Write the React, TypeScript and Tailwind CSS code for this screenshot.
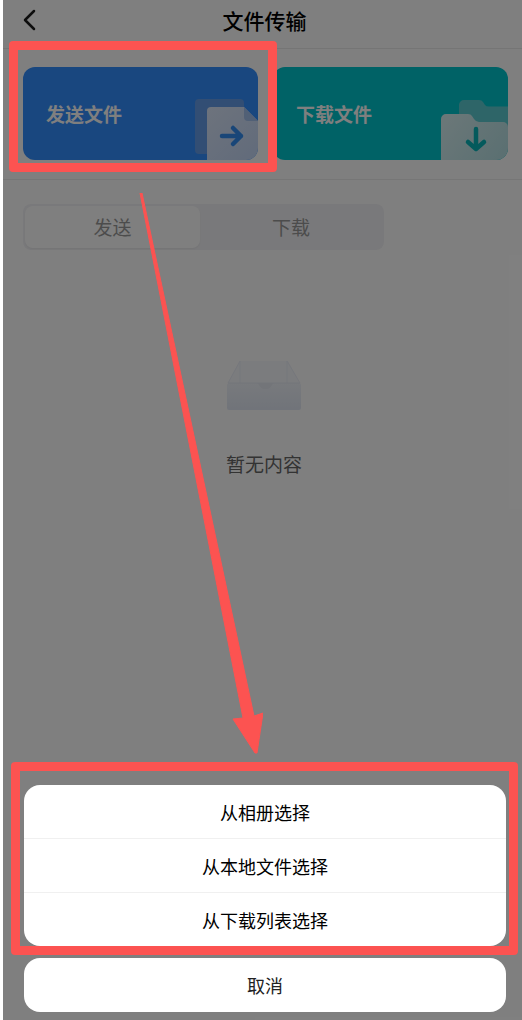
import clsx from "clsx";

const sources = ["从相册选择", "从本地文件选择", "从下载列表选择"];

const tabs = [
  { label: "发送", active: true },
  { label: "下载", active: false },
];

function SendArt() {
  return (
    <svg width="63" height="61" viewBox="0 0 63 61" fill="none" aria-hidden="true">
      <rect y="0" width="49" height="55" rx="4" fill="#649de8" />
      <path d="M12 61V12a4 4 0 0 1 4-4h33l14 14v39z" fill="url(#sheet)" />
      <path d="M49 8v10a4 4 0 0 0 4 4h10z" fill="#a3c0ec" />
      <path
        d="M27 37h19M38 29l8 8-8 8"
        stroke="#328cf0"
        strokeWidth="4.5"
        strokeLinecap="round"
        strokeLinejoin="round"
      />
      <defs>
        <linearGradient id="sheet" x1="12" y1="8" x2="63" y2="61" gradientUnits="userSpaceOnUse">
          <stop stopColor="#dbe7fa" />
          <stop offset="1" stopColor="#c3d6f6" />
        </linearGradient>
      </defs>
    </svg>
  );
}

function DownloadArt() {
  return (
    <svg width="67" height="60" viewBox="0 0 67 60" fill="none" aria-hidden="true">
      <path d="M18 60V5a5 5 0 0 1 5-5h15q3 0 4 2l2 3q1 1.500 4 1.500h19V60z" fill="#5ccbd0" />
      <path
        d="M0 60V19a5 5 0 0 1 5-5h22q3 0 4 2l2 3q2 3 5 3h24a5 5 0 0 1 5 5v33z"
        fill="url(#folder)"
      />
      <path
        d="M35 29v20M27 42l8 7 8-7"
        stroke="#08b5b9"
        strokeWidth="4.500"
        strokeLinecap="round"
        strokeLinejoin="round"
      />
      <defs>
        <linearGradient id="folder" x1="0" y1="14" x2="67" y2="60" gradientUnits="userSpaceOnUse">
          <stop stopColor="#d8f0f2" />
          <stop offset="1" stopColor="#b4dfe3" />
        </linearGradient>
      </defs>
    </svg>
  );
}

function EmptyTray() {
  return (
    <svg width="74" height="50" viewBox="0 0 74 50" fill="none" aria-hidden="true">
      <path d="M13 1h48l12 22H1z" fill="#f6f9fd" />
      <path d="M13 1v22M60 1v22M13 1L1 23M60 1l13 22" stroke="#eceff8" />
      <path d="M28 23h20v8H28z" fill="#e6eaf3" />
      <path
        d="M3 23h27q1 0 2 2 2 4 5 4h3q3 0 5-4 1-2 2-2h25q2 0 2 2v23q0 2-2 2H2q-2 0-2-2V25q0-2 3-2z"
        fill="url(#tray)"
      />
      <path d="M1 23h72" stroke="#e6eaf3" />
      <defs>
        <linearGradient id="tray" x1="37" y1="23" x2="37" y2="50" gradientUnits="userSpaceOnUse">
          <stop stopColor="#f0f4fa" />
          <stop offset="1" stopColor="#e2e8f4" />
        </linearGradient>
      </defs>
    </svg>
  );
}

function Highlight({ className }: { className: string }) {
  return (
    <div
      aria-hidden="true"
      className={clsx(
        "pointer-events-none absolute z-20 rounded-sm border-9 border-[#fc5351]",
        className,
      )}
    />
  );
}

export default function App() {
  return (
    <main className="relative min-h-screen overflow-hidden bg-white pl-[3px] font-['Noto_Sans_CJK_SC',sans-serif]">
      <header className="grid h-[49px] grid-cols-[52px_1fr_48px] items-center border-b border-[#ebebeb] pb-2">
        <button type="button" aria-label="返回" className="flex h-10 items-center pl-5">
          <svg width="13" height="22" viewBox="0 0 13 22" fill="none" aria-hidden="true">
            <path
              d="M11 2L2 11l9 9"
              stroke="#1a1a1a"
              strokeWidth="2.500"
              strokeLinecap="round"
              strokeLinejoin="round"
            />
          </svg>
        </button>
        <h1 className="text-center text-[21px] leading-8 font-medium text-black">文件传输</h1>
      </header>

      <section className="grid grid-cols-2 gap-[15px] border-b border-[#ededed] pt-[18px] pr-[14px] pb-[19px] pl-5">
        <div className="relative">
          <button
            type="button"
            className="flex h-[93px] w-full items-end justify-between overflow-hidden rounded-xl bg-[#328eff] pl-[23px]"
          >
            <span className="self-center text-[19px] leading-7 font-bold text-white">发送文件</span>
            <SendArt />
          </button>
          <Highlight className="-top-[26px] -right-[19px] -bottom-3 -left-[14px]" />
        </div>
        <button
          type="button"
          className="flex h-[93px] w-full items-end justify-between overflow-hidden rounded-xl bg-[#00c4cc] pl-[23px]"
        >
          <span className="self-center text-[19px] leading-7 font-bold text-white">下载文件</span>
          <DownloadArt />
        </button>
      </section>

      <section className="px-5 pt-6">
        <div
          role="tablist"
          className="grid h-[46px] w-[361px] max-w-full grid-cols-[175fr_182fr] rounded-lg bg-[#f3f3f6] p-[2px]"
        >
          {tabs.map((tab) => (
            <button
              key={tab.label}
              type="button"
              role="tab"
              aria-selected={tab.active}
              className={clsx(
                "rounded-lg text-[19px] leading-7 text-[#999]",
                tab.active && "bg-white shadow-xs",
              )}
            >
              {tab.label}
            </button>
          ))}
        </div>
      </section>

      <section className="flex flex-col items-center gap-10 pt-[110px] pl-[3px]">
        <EmptyTray />
        <p className="text-[19px] leading-7 text-[#666]">暂无内容</p>
      </section>

      <div className="absolute inset-y-0 right-0 left-[3px] z-10 flex flex-col justify-end gap-3 bg-black/50 pr-4 pb-2 pl-[21px]">
        <div className="relative">
          <ul className="divide-y divide-[#f0f0f0] overflow-hidden rounded-2xl bg-white">
            {sources.map((source) => (
              <li key={source}>
                <button type="button" className="h-[53px] w-full text-lg text-black">
                  {source}
                </button>
              </li>
            ))}
          </ul>
          <Highlight className="-top-[23px] -right-3 -bottom-[9px] -left-[13px]" />
        </div>
        <button type="button" className="h-[54px] w-full rounded-2xl bg-white text-lg text-[#222]">
          取消
        </button>
      </div>

      <svg
        width="130"
        height="561"
        viewBox="0 0 130 561"
        fill="#fc5351"
        aria-hidden="true"
        className="pointer-events-none absolute top-[193px] left-[133px] z-20"
      >
        <path
          d="M7 0h2l112 523 9-3-6 40h-2L100 526l10-1z"
          stroke="#fc5351"
          strokeLinejoin="round"
        />
      </svg>
    </main>
  );
}
